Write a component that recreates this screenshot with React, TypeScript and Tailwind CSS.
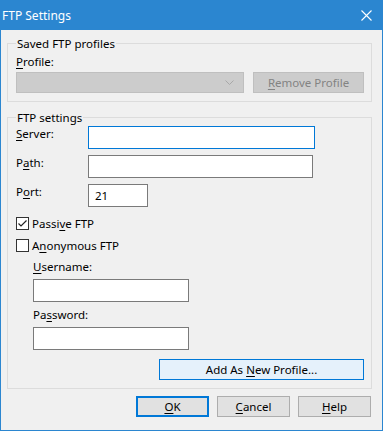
import React from "react";

const font = { fontFamily: '"Segoe UI", "Noto Sans", "Liberation Sans", sans-serif' };

function U({ children }: { children: React.ReactNode }) {
  return <span className="underline underline-offset-2">{children}</span>;
}

function Group({ title, className, children }: { title: string; className: string; children: React.ReactNode }) {
  return (
    <div className={`relative ml-[6px] w-[365px] border border-[#dcdcdc] flex flex-col pl-[8px] pr-[7px] ${className}`}>
      <span className="absolute -top-[8px] left-[8px] px-px bg-[#f0f0f0]">{title}</span>
      {children}
    </div>
  );
}

function Row({ label, children }: { label: React.ReactNode; children: React.ReactNode }) {
  return (
    <div className="flex items-start">
      <div className="w-[72px]">{label}</div>
      {children}
    </div>
  );
}

function Check({ checked, children }: { checked?: boolean; children: React.ReactNode }) {
  return (
    <div className="flex items-center gap-[3px] h-[13px]">
      <div className="w-[13px] h-[13px] bg-white border border-[#333] flex items-center justify-center">
        {checked && (
          <svg width="11" height="11" viewBox="0 0 11 11">
            <path d="M1.5 5.5 L4 8 L9.5 2.5" fill="none" stroke="#222" strokeWidth="1.2" />
          </svg>
        )}
      </div>
      <span>{children}</span>
    </div>
  );
}

function Btn({ children, focused }: { children: React.ReactNode; focused?: boolean }) {
  return (
    <div
      className={`w-[73px] h-[21px] flex items-center justify-center bg-[#e1e1e1] ${
        focused ? "border-2 border-[#0078d7]" : "border border-[#adadad]"
      }`}
    >
      <span>{children}</span>
    </div>
  );
}

export default function App() {
  return (
    <div
      className="w-[383px] h-[431px] bg-[#f0f0f0] border-x border-b border-[#2b86d0] flex flex-col text-[11.5px] leading-[15px] text-black"
      style={font}
    >
      {/* title bar */}
      <div className="h-[30px] -mx-px shrink-0 bg-[#2b86d0] flex items-center justify-between pl-[2px] pr-[11px] text-white">
        <span className="text-[12px]">FTP Settings</span>
        <svg width="11" height="11" viewBox="0 0 11 11">
          <path d="M0.5 0.5 L10.5 10.5 M10.5 0.5 L0.5 10.5" stroke="#fff" strokeWidth="1.1" />
        </svg>
      </div>

      <Group title="Saved FTP profiles" className="mt-[13px] pt-[10px] pb-[8px]">
        <div>
          <U>P</U>rofile:
        </div>
        <div className="mt-[3px] flex gap-[9px]">
          <div className="w-[228px] h-[21px] bg-[#cccccc] border border-[#bfbfbf] flex items-center justify-end pr-[9px]">
            <svg width="9" height="6" viewBox="0 0 9 6">
              <path d="M0.5 0.5 L4.5 4.5 L8.5 0.5" fill="none" stroke="#a8a8a8" strokeWidth="1" />
            </svg>
          </div>
          <div className="w-[111px] h-[21px] bg-[#cccccc] border border-[#bfbfbf] flex items-center justify-center text-[#838383]">
            <span>
              <U>R</U>emove Profile
            </span>
          </div>
        </div>
      </Group>

      <Group title="FTP settings" className="mt-[15px] pt-[8px] pb-[8px]">
        <Row
          label={
            <>
              <U>S</U>erver:
            </>
          }
        >
          <div className="w-[227px] h-[23px] bg-white border border-[#0078d7]" />
        </Row>
        <div className="mt-[6px]">
          <Row
            label={
              <>
                P<U>a</U>th:
              </>
            }
          >
            <div className="w-[225px] h-[23px] bg-white border border-[#7a7a7a]" />
          </Row>
        </div>
        <div className="mt-[6px]">
          <Row
            label={
              <>
                P<U>o</U>rt:
              </>
            }
          >
            <div className="w-[60px] h-[23px] bg-white border border-[#7a7a7a] flex items-center pl-[6px]">21</div>
          </Row>
        </div>

        <div className="mt-[10px] flex flex-col gap-[9px]">
          <Check checked>
            Passi<U>v</U>e FTP
          </Check>
          <Check>
            A<U>n</U>onymous FTP
          </Check>
        </div>

        <div className="pl-[17px] mt-[7px] flex flex-col">
          <div>
            <U>U</U>sername:
          </div>
          <div className="mt-[5px] w-[156px] h-[23px] bg-white border border-[#7a7a7a]" />
          <div className="mt-[5px]">
            Pa<U>s</U>sword:
          </div>
          <div className="mt-[5px] w-[156px] h-[23px] bg-white border border-[#7a7a7a]" />
        </div>

        <div className="mt-[9px] self-end w-[205px] h-[21px] bg-[#e5f1fb] border border-[#0078d7] flex items-center justify-center">
          <span>
            Add As <U>N</U>ew Profile...
          </span>
        </div>
      </Group>

      <div className="mt-[7px] pl-[135px] flex gap-[8px]">
        <Btn focused>
          <U>O</U>K
        </Btn>
        <Btn>
          <U>C</U>ancel
        </Btn>
        <Btn>
          <U>H</U>elp
        </Btn>
      </div>
    </div>
  );
}
